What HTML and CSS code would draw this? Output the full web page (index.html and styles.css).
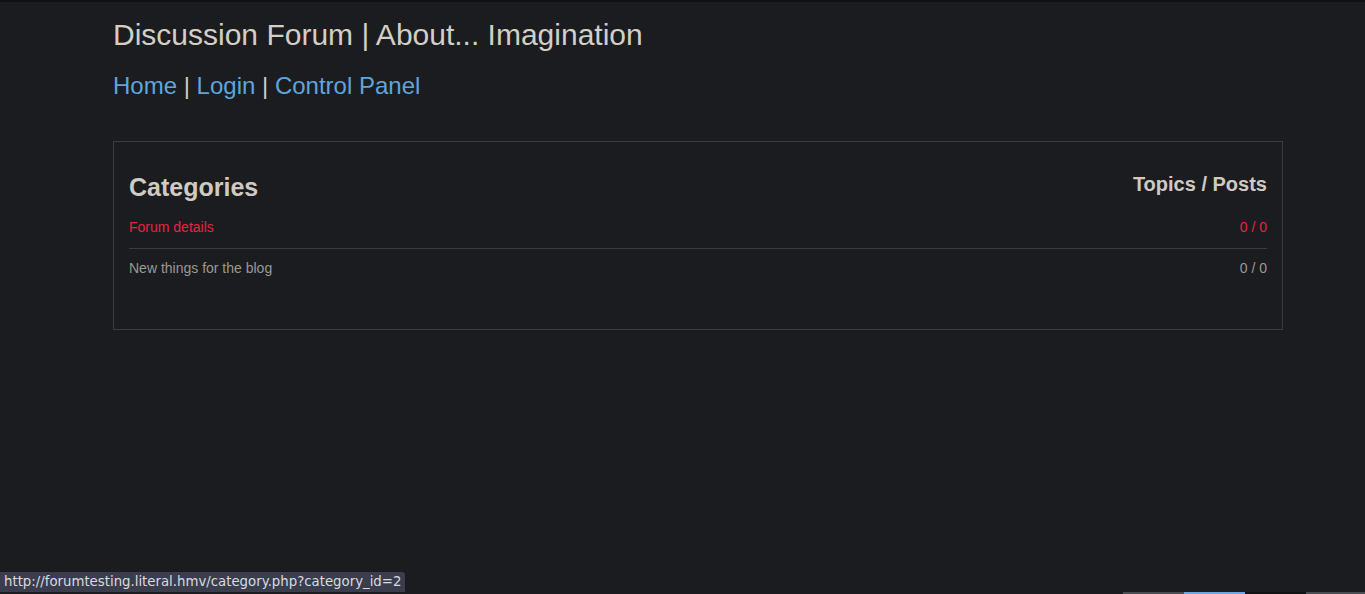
FILE: index.html
```html
<!DOCTYPE html>
<html lang="en">

<head>
  <meta charset="UTF-8">
  <meta name="viewport" content="width=device-width, initial-scale=1.0">
  <title>Discussion Forum</title>
  <link rel="stylesheet" href="styles.css">
</head>

<body>
  <div class="page">
    <!-- header -->
    <h1 class="site-title">Discussion Forum | About... Imagination</h1>
    <div class="nav">
      <a href="#">Home</a> | <a href="#">Login</a> | <a href="#">Control Panel</a>
    </div>

    <!-- categories box -->
    <div class="panel">
      <div class="panel-head">
        <h2>Categories</h2>
        <h3>Topics / Posts</h3>
      </div>
      <div class="row current">
        <a href="#">Forum details</a>
        <span>0 / 0</span>
      </div>
      <div class="row">
        <a href="#">New things for the blog</a>
        <span>0 / 0</span>
      </div>
    </div>
  </div>

  <!-- browser status bubble -->
  <div class="status">http://forumtesting.literal.hmv/category.php?category_id=2</div>
  <div class="taskbar">
    <span class="t1"></span>
    <span class="t2"></span>
    <span class="t3"></span>
    <span class="t4"></span>
  </div>
</body>

</html>
```

FILE: styles.css
```css
* {
  margin: 0;
  padding: 0
}

html,
body {
  height: 100%;
}

body {
  background-color: #1b1c1f;
  border-top: 2px solid #0f1012;
  font-family: "Liberation Sans", Arial, sans-serif;
  color: #cfcac2;
  overflow: hidden;
}

a {
  text-decoration: none;
}

.page {
  width: 1170px;
  margin-left: 113px;
}

.site-title {
  font-size: 30px;
  font-weight: normal;
  line-height: 34px;
  padding-top: 16px;
  color: #d3cec6;
}

.nav {
  margin-top: 20px;
  font-size: 24px;
  line-height: 28px;
  color: #cfcac2;
}

.nav a {
  color: #5ea5de;
}

.panel {
  margin-top: 41px;
  height: 189px;
  border: 1px solid #3b3c40;
  padding: 0 15px;
  box-sizing: border-box;
}

.panel-head {
  display: flex;
  justify-content: space-between;
  align-items: flex-start;
  padding-top: 29px;
}

.panel-head h2 {
  font-size: 25px;
  line-height: 32px;
}

.panel-head h3 {
  font-size: 20px;
  line-height: 24px;
  padding-top: 1px;
}

.row {
  display: flex;
  justify-content: space-between;
  font-size: 14px;
  line-height: 20px;
  padding: 9px 0 11px;
  color: #9c9893;
}

.row a {
  color: #9c9893;
}

.row + .row {
  border-top: 1px solid #3b3c40;
}

.row.current {
  padding-top: 14px;
}

.row.current,
.row.current a {
  color: #e8233f;
}

.status {
  position: fixed;
  left: 0;
  bottom: 2px;
  height: 20px;
  line-height: 20px;
  padding: 0 4px;
  background-color: #3a3e4c;
  border-top-right-radius: 3px;
  color: #d8dae0;
  font-family: "DejaVu Sans", sans-serif;
  font-size: 13.3px;
}

.taskbar {
  position: fixed;
  left: 0;
  right: 0;
  bottom: 0;
  height: 2px;
  display: flex;
  justify-content: flex-end;
}

.taskbar span {
  width: 61px;
  height: 2px;
}

.taskbar .t1 {
  background-color: #4a4d52;
}

.taskbar .t2 {
  background-color: #6ea6e0;
}

.taskbar .t3 {
  background-color: #111214;
}

.taskbar .t4 {
  width: 59px;
  background-color: #4a4d52;
}
```
